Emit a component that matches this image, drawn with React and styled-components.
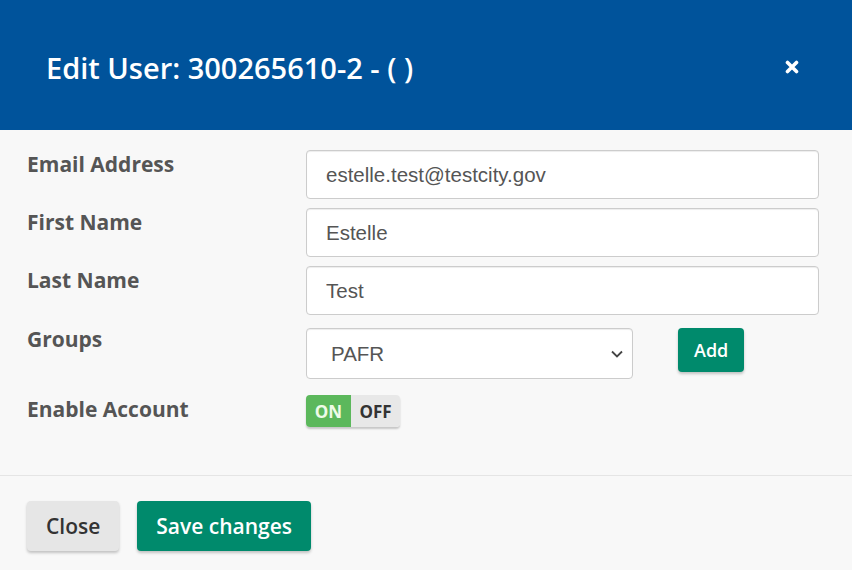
import React from "react";
import styled, { createGlobalStyle } from "styled-components";

const Global = createGlobalStyle`
  html, body { margin: 0; padding: 0; background: #f8f8f8; }
  body { font-family: "Open Sans", "Liberation Sans", sans-serif; }
  * { box-sizing: border-box; }
`;

const Modal = styled.div`
  width: 852px;
  height: 570px;
  display: flex;
  flex-direction: column;
  background: #f8f8f8;
`;

const Header = styled.header`
  height: 130px;
  flex: none;
  background: #00539b;
  display: flex;
  align-items: flex-start;
  justify-content: space-between;
  padding: 51px 53px 0 46px;
`;

const Title = styled.h4`
  margin: 0;
  color: #fff;
  font-family: "Open Sans", sans-serif;
  font-weight: 600;
  font-size: 29px;
  line-height: 1.2;
`;

const CloseX = styled.button`
  border: 0;
  background: transparent;
  padding: 0;
  margin-top: 9px;
  width: 14px;
  height: 14px;
  display: flex;
  cursor: pointer;
`;

const Body = styled.div`
  flex: 1;
  padding: 20px 27px 0;
  display: flex;
  flex-direction: column;
`;

const Row = styled.div`
  display: grid;
  grid-template-columns: 279px auto;
  align-items: start;
  margin-bottom: ${(p) => p.$mb}px;
`;

const Label = styled.label`
  font-family: "Open Sans", sans-serif;
  font-weight: 700;
  font-size: 21px;
  line-height: 28px;
  color: #555;
  margin-top: ${(p) => p.$mt || 0}px;
`;

const Input = styled.input`
  width: 513px;
  height: 49px;
  border: 1px solid #ccc;
  border-radius: 4px;
  background: #fff;
  box-shadow: inset 0 1px 1px rgba(0, 0, 0, 0.075);
  padding: 0 19px;
  font-family: "Liberation Sans", Arial, sans-serif;
  font-size: 20.5px;
  color: #555;
  outline: none;
`;

const GroupLine = styled.div`
  display: flex;
  align-items: flex-start;
  gap: 45px;
`;

const SelectWrap = styled.div`
  position: relative;
  width: 327px;
  height: 51px;
`;

const Select = styled.select`
  appearance: none;
  -webkit-appearance: none;
  width: 100%;
  height: 100%;
  border: 1px solid #ccc;
  border-radius: 4px;
  background: #fff;
  box-shadow: inset 0 1px 1px rgba(0, 0, 0, 0.075);
  padding: 0 24px;
  font-family: "Liberation Sans", Arial, sans-serif;
  font-size: 20.5px;
  color: #555;
  outline: none;
`;

const Chevron = styled.svg`
  position: absolute;
  right: 10px;
  top: 22px;
  pointer-events: none;
`;

const Btn = styled.button`
  border: 0;
  border-radius: 4px;
  font-family: "Open Sans", sans-serif;
  font-weight: 600;
  cursor: pointer;
  box-shadow: 0 2px 3px rgba(0, 0, 0, 0.22);
  background: ${(p) => (p.$primary ? "#008a6c" : "#e6e6e6")};
  color: ${(p) => (p.$primary ? "#fff" : "#333")};
  font-size: ${(p) => p.$fs || 21}px;
  height: ${(p) => p.$h || 50}px;
  padding: 0 ${(p) => p.$px || 19}px;
`;

const Toggle = styled.div`
  display: inline-flex;
  height: 32px;
  border-radius: 4px;
  overflow: hidden;
  box-shadow: 0 2px 2px rgba(0, 0, 0, 0.2);
  font-family: "Open Sans", sans-serif;
  font-weight: 700;
  font-size: 17px;
`;

const ToggleHalf = styled.span`
  display: flex;
  align-items: center;
  justify-content: center;
  width: ${(p) => p.$w}px;
  background: ${(p) => (p.$on ? "#5cb85c" : "#e8e8e8")};
  color: ${(p) => (p.$on ? "#eefbe8" : "#333")};
`;

const Footer = styled.footer`
  flex: none;
  height: 95px;
  border-top: 1px solid #e5e5e5;
  padding: 25px 27px 0;
  display: flex;
  align-items: flex-start;
  gap: 18px;
`;

export default function App() {
  return (
    <>
      <Global />
      <Modal>
        <Header>
          <Title>Edit User: 300265610-2 - ( )</Title>
          <CloseX aria-label="close">
            <svg width="14" height="14" viewBox="0 0 14 14">
              <path d="M2.5 2.5 L11.5 11.5 M11.5 2.5 L2.5 11.5" stroke="#fff" strokeWidth="3.6" strokeLinecap="round" />
            </svg>
          </CloseX>
        </Header>
        <Body>
          <Row $mb={9}>
            <Label>Email Address</Label>
            <Input defaultValue="estelle.test@testcity.gov" />
          </Row>
          <Row $mb={9}>
            <Label>First Name</Label>
            <Input defaultValue="Estelle" />
          </Row>
          <Row $mb={13}>
            <Label>Last Name</Label>
            <Input defaultValue="Test" />
          </Row>
          <Row $mb={16}>
            <Label $mt={-3}>Groups</Label>
            <GroupLine>
              <SelectWrap>
                <Select defaultValue="PAFR">
                  <option>PAFR</option>
                </Select>
                <Chevron width="12" height="8" viewBox="0 0 12 8">
                  <path d="M1 1.5 L6 6.5 L11 1.5" fill="none" stroke="#444" strokeWidth="1.8" />
                </Chevron>
              </SelectWrap>
              <Btn $primary $h={44} $px={16} $fs={18}>Add</Btn>
            </GroupLine>
          </Row>
          <Row $mb={0}>
            <Label>Enable Account</Label>
            <div>
              <Toggle>
                <ToggleHalf $on $w={45}>ON</ToggleHalf>
                <ToggleHalf $w={49}>OFF</ToggleHalf>
              </Toggle>
            </div>
          </Row>
        </Body>
        <Footer>
          <Btn>Close</Btn>
          <Btn $primary>Save changes</Btn>
        </Footer>
      </Modal>
    </>
  );
}
